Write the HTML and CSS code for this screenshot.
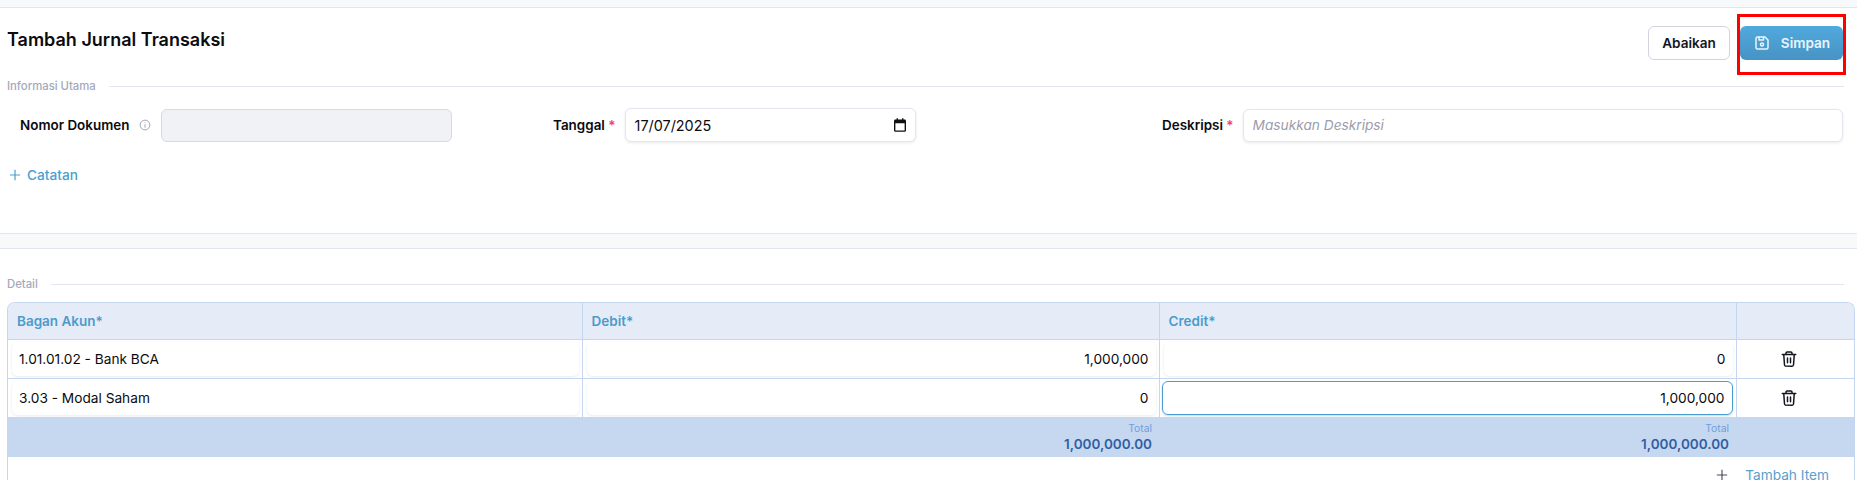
FILE: index.html
```html
<!DOCTYPE html>
<html>
<head>
    <title>Tambah Jurnal Transaksi</title>
    <link rel="stylesheet" href="styles.css">
</head>
<body>
    <section class="panel panel-main">
        <div class="page-head">
            <h1>Tambah Jurnal Transaksi</h1>
            <div class="actions">
                <button class="btn btn-plain">Abaikan</button>
                <div class="highlight">
                    <button class="btn btn-primary">
                        <svg class="btn-icon" viewBox="0 0 24 24" fill="none" stroke="currentColor" stroke-width="2" stroke-linecap="round" stroke-linejoin="round">
                            <path d="M6 4h10l4 4v10a2 2 0 0 1-2 2H6a2 2 0 0 1-2-2V6a2 2 0 0 1 2-2"/>
                            <circle cx="12" cy="14" r="2"/>
                            <path d="M14 4v4H8V4"/>
                        </svg>
                        <span>Simpan</span>
                    </button>
                </div>
            </div>
        </div>

        <div class="divider divider-main"><span>Informasi Utama</span></div>

        <div class="form-row">
            <div class="field field-nomor">
                <label>Nomor Dokumen</label>
                <svg class="info-icon" viewBox="0 0 16 16" fill="none" stroke="currentColor" stroke-width="1.2">
                    <circle cx="8" cy="8" r="6.5"/>
                    <path d="M8 7v4.5M8 4.5v1"/>
                </svg>
                <input class="input input-disabled input-nomor" type="text" disabled>
            </div>
            <div class="field field-tanggal">
                <label>Tanggal <em>*</em></label>
                <div class="input input-date">
                    <span>17/07/2025</span>
                    <svg class="date-icon" viewBox="0 0 14 16">
                        <path d="M3 0h1.6v1.6h4.8V0H11v1.6h1.4A1.6 1.6 0 0 1 14 3.2v11.2a1.6 1.6 0 0 1-1.6 1.6H1.6A1.6 1.6 0 0 1 0 14.4V3.2a1.6 1.6 0 0 1 1.6-1.6H3zM1.6 6v8.4h10.8V6z"/>
                    </svg>
                </div>
            </div>
            <div class="field field-deskripsi">
                <label>Deskripsi <em>*</em></label>
                <input class="input input-deskripsi" type="text" placeholder="Masukkan Deskripsi">
            </div>
        </div>

        <a class="link-catatan" href="#">
            <svg viewBox="0 0 14 14" fill="none" stroke="currentColor" stroke-width="1.4"><path d="M7 1v12M1 7h12"/></svg>
            Catatan
        </a>
    </section>

    <div class="gap-strip"></div>

    <section class="panel panel-detail">
        <div class="divider divider-detail"><span>Detail</span></div>

        <div class="table-wrap">
            <table class="items">
                <colgroup>
                    <col class="col-akun">
                    <col class="col-debit">
                    <col class="col-credit">
                    <col>
                </colgroup>
                <thead>
                    <tr>
                        <th>Bagan Akun*</th>
                        <th>Debit*</th>
                        <th>Credit*</th>
                        <th></th>
                    </tr>
                </thead>
                <tbody>
                    <tr>
                        <td><div class="cell">1.01.01.02 - Bank BCA</div></td>
                        <td><div class="cell num">1,000,000</div></td>
                        <td><div class="cell num">0</div></td>
                        <td class="del">
                            <svg class="trash" viewBox="0 0 24 24" fill="none" stroke="currentColor" stroke-width="2" stroke-linecap="round" stroke-linejoin="round">
                                <path d="M3 6h18M8 6V4a1.5 1.5 0 0 1 1.5-1.5h5A1.5 1.5 0 0 1 16 4v2M5 6l1 14a1.8 1.8 0 0 0 1.8 1.5h8.4A1.8 1.8 0 0 0 18 20l1-14M10 10.5v6.5M14 10.5v6.5"/>
                            </svg>
                        </td>
                    </tr>
                    <tr>
                        <td><div class="cell">3.03 - Modal Saham</div></td>
                        <td><div class="cell num">0</div></td>
                        <td><div class="cell num cell-focus">1,000,000</div></td>
                        <td class="del">
                            <svg class="trash" viewBox="0 0 24 24" fill="none" stroke="currentColor" stroke-width="2" stroke-linecap="round" stroke-linejoin="round">
                                <path d="M3 6h18M8 6V4a1.5 1.5 0 0 1 1.5-1.5h5A1.5 1.5 0 0 1 16 4v2M5 6l1 14a1.8 1.8 0 0 0 1.8 1.5h8.4A1.8 1.8 0 0 0 18 20l1-14M10 10.5v6.5M14 10.5v6.5"/>
                            </svg>
                        </td>
                    </tr>
                </tbody>
                <tfoot>
                    <tr>
                        <td></td>
                        <td><small>Total</small><strong>1,000,000.00</strong></td>
                        <td><small>Total</small><strong>1,000,000.00</strong></td>
                        <td></td>
                    </tr>
                </tfoot>
            </table>
            <div class="table-add">
                <svg viewBox="0 0 14 14" fill="none" stroke="currentColor" stroke-width="1.3"><path d="M7 1v12M1 7h12"/></svg>
                <a href="#">Tambah Item</a>
            </div>
        </div>
    </section>
</body>
</html>
```

FILE: styles.css
```css
* {
    box-sizing: border-box;
    margin: 0;
    padding: 0;
}

html, body {
    height: 480px;
    overflow: hidden;
}

body {
    font-family: Inter, "Liberation Sans", sans-serif;
    font-size: 13.7px;
    color: #0b0b0f;
    background-color: #fff;
    padding-top: 7px;
    background-image: linear-gradient(#f8f9fb, #f8f9fb);
    background-size: 100% 7px;
    background-repeat: no-repeat;
}

.panel {
    border-top: 1px solid #e4e6ed;
    background-color: #fff;
}

.panel-main {
    height: 227px;
    border-bottom: 1px solid #e4e6ed;
}

.gap-strip {
    height: 14px;
    background-color: #f8f9fb;
}

.panel-detail {
    padding-top: 28px;
}

.page-head {
    display: flex;
    justify-content: space-between;
    align-items: flex-start;
    height: 71px;
    padding: 18px 14px 0 7px;
}

h1 {
    font-size: 18px;
    font-weight: 600;
    line-height: 28px;
}

.actions {
    display: flex;
    gap: 10px;
}

.btn {
    display: flex;
    align-items: center;
    justify-content: center;
    height: 34px;
    font-family: inherit;
    font-size: 13.6px;
    font-weight: 600;
    border-radius: 6px;
    cursor: pointer;
}

.btn-plain {
    width: 82px;
    background-color: #fff;
    color: #14161f;
    border: 1px solid #d3d4e0;
}

.btn-primary {
    width: 103px;
    gap: 10px;
    color: #e8f5fc;
    border: none;
    background: linear-gradient(#51a9dd, #4793c4);
}

.btn-icon {
    width: 18px;
    height: 18px;
}

/* red marker around the save button */
.highlight {
    position: relative;
}

.highlight:after {
    content: "";
    box-sizing: border-box;
    position: absolute;
    left: -3px;
    top: -12px;
    width: 109px;
    height: 61px;
    border: 3px solid #f00;
    pointer-events: none;
}

.divider {
    display: flex;
    align-items: center;
    padding-left: 7px;
    margin-right: 13px;
    font-size: 11.3px;
    font-weight: 500;
    color: #a5a8bb;
}

.divider:after {
    content: "";
    flex: 1;
    height: 1px;
    background-color: #e4e6ed;
}

.divider-main:after {
    margin-left: 13px;
}

.divider-detail:after {
    margin-left: 13px;
}

.form-row {
    display: flex;
    margin-top: 15px;
    margin-right: 14px;
}

.field {
    display: flex;
    align-items: center;
}

.field label {
    font-size: 13.45px;
    font-weight: 600;
}

.field em {
    font-style: normal;
    color: #f0445a;
}

.field-nomor {
    width: 553px;
    padding-left: 20px;
}

.field-tanggal {
    width: 609px;
}

.field-deskripsi {
    flex: 1;
}

.info-icon {
    width: 12px;
    height: 12px;
    margin-left: 10px;
    color: #9a9db0;
}

.input {
    height: 33px;
    font-family: inherit;
    font-size: 13.7px;
    color: #0b0b0f;
    background-color: #fff;
    border: 1px solid #e4e6ed;
    border-radius: 6px;
    box-shadow: 0 1px 3px rgba(20, 24, 40, 0.09);
}

.input-disabled {
    background-color: #f1f2f6;
    border-color: #d6d8e2;
    box-shadow: none;
}

.input-nomor {
    width: 291px;
    margin-left: 10px;
}

.input-date {
    display: flex;
    align-items: center;
    justify-content: space-between;
    width: 291px;
    height: 34px;
    margin-left: 9px;
    padding: 0 9px;
    font-size: 14.4px;
}

.date-icon {
    width: 12px;
    height: 14px;
    fill: #111;
}

.input-deskripsi {
    flex: 1;
    margin-left: 9px;
    padding: 0 9px;
    outline: none;
}

.input-deskripsi::placeholder {
    color: #9a9dad;
    font-style: italic;
}

.link-catatan {
    display: flex;
    align-items: center;
    gap: 6px;
    margin-top: 25px;
    padding-left: 9px;
    font-weight: 500;
    color: #4b9fd1;
    text-decoration: none;
}

.link-catatan svg {
    width: 12px;
    height: 12px;
}

.table-wrap {
    margin: 11px 2px 0 7px;
    border: 1px solid #c5d7f0;
    border-radius: 8px 8px 0 0;
    border-bottom: none;
    overflow: hidden;
}

.items {
    width: 100%;
    table-layout: fixed;
    border-collapse: collapse;
}

.col-akun {
    width: 574px;
}

.col-debit {
    width: 577px;
}

.col-credit {
    width: 577px;
}

.items th {
    height: 36px;
    padding: 0 9px;
    font-size: 13.5px;
    font-weight: 600;
    text-align: left;
    color: #4b9bcb;
    background-color: #e5ecf8;
    border-right: 1px solid #c5d7f0;
    border-bottom: 1px solid #c5d7f0;
}

.items th:last-child {
    border-right: none;
}

.items tbody td {
    height: 39px;
    padding: 2px 3px 2px 4px;
    border-right: 1px solid #c5d7f0;
    border-bottom: 1px solid #c5d7f0;
}

.items tbody tr:last-child td {
    border-bottom: none;
}

.items tbody td:last-child {
    border-right: none;
}

.cell {
    display: flex;
    align-items: center;
    height: 34px;
    padding: 0 7px 0 7px;
    border-radius: 6px;
    box-shadow: 0 1px 3px rgba(20, 24, 40, 0.09);
}

.num {
    justify-content: flex-end;
}

.cell-focus {
    margin-left: -2px;
    border: 1px solid #4a9bcf;
    box-shadow: 0 1px 2px rgba(74, 155, 207, 0.35);
}

.items .del {
    padding-right: 16px;
}

.trash {
    display: block;
    width: 18px;
    height: 18px;
    margin: 0 auto;
    color: #14161f;
}

.items tfoot td {
    height: 40px;
    padding: 0 7px 0 0;
    text-align: right;
    background-color: #c6d7f0;
}

.items small {
    display: block;
    font-size: 10.3px;
    line-height: 14px;
    color: #6f9fdc;
}

.items strong {
    display: block;
    font-size: 13.5px;
    font-weight: 600;
    line-height: 18px;
    color: #2f5fa3;
}

.table-add {
    display: flex;
    justify-content: flex-end;
    align-items: center;
    gap: 17px;
    height: 36px;
    padding-right: 25px;
    color: #5a9ecb;
}

.table-add svg {
    width: 12px;
    height: 12px;
    color: #444a5c;
}

.table-add a {
    color: inherit;
    text-decoration: none;
}
```
